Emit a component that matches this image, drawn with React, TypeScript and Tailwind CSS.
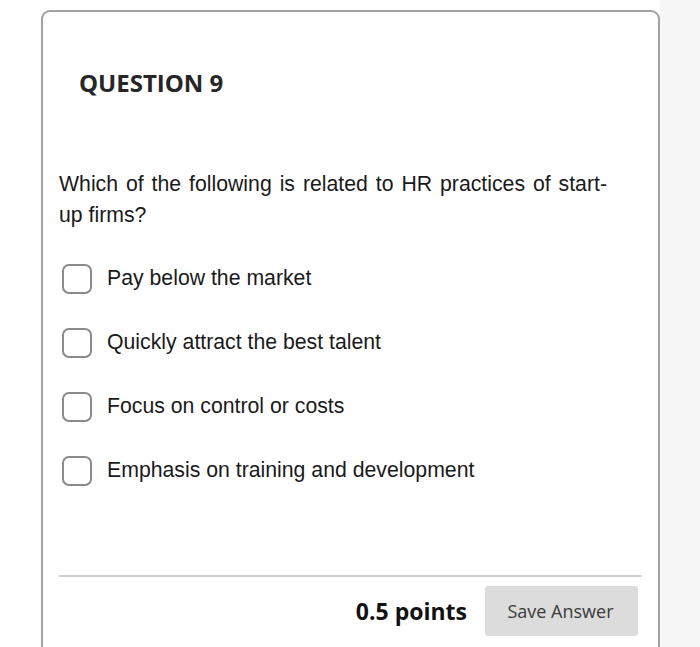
import React from "react";

const options = [
  "Pay below the market",
  "Quickly attract the best talent",
  "Focus on control or costs",
  "Emphasis on training and development",
];

export default function App() {
  return (
    <div className="w-[700px] h-[647px] overflow-hidden bg-white flex">
      <div className="w-[660px] pl-[41px] pt-[10px] shrink-0">
        <div className="h-[660px] border-2 border-[#a3a3a3] rounded-[9px] bg-white pl-[16px] pr-[16px]">
          <h2
            className="pt-[55px] pl-[20px] text-[24px] leading-[32px] font-bold text-[#262626]"
            style={{ fontFamily: "'Open Sans', sans-serif" }}
          >
            QUESTION 9
          </h2>
          <div style={{ fontFamily: "'Liberation Sans', Arial, sans-serif" }}>
            <p className="mt-[70px] w-[548px] text-justify text-[21.25px] leading-[31px] text-[#1a1a1a]">
              Which of the following is related to HR practices of start-up firms?
            </p>
            <div className="mt-[33px] flex flex-col gap-[34px]">
              {options.map((o) => (
                <label key={o} className="flex items-center gap-[15px] h-[30px]">
                  <span className="ml-[3px] w-[30px] h-[30px] border-[2.5px] border-[#8a8a8a] rounded-[7px] bg-white shrink-0" />
                  <span className="text-[21.25px] text-[#1a1a1a]">{o}</span>
                </label>
              ))}
            </div>
          </div>
          <div className="mt-[89px] border-t-2 border-[#d0d0d0]" />
          <div
            className="mt-[9px] flex items-center justify-end gap-[18px] pr-[4px]"
            style={{ fontFamily: "'Open Sans', sans-serif" }}
          >
            <span className="text-[23px] font-bold text-[#111]">0.5 points</span>
            <button className="w-[153px] h-[50px] pr-[2px] bg-[#dcdcdc] rounded-[3px] text-[18px] text-[#3a3a3a]">
              Save Answer
            </button>
          </div>
        </div>
      </div>
      <div className="flex-1 bg-[#f7f7f7]" />
    </div>
  );
}
